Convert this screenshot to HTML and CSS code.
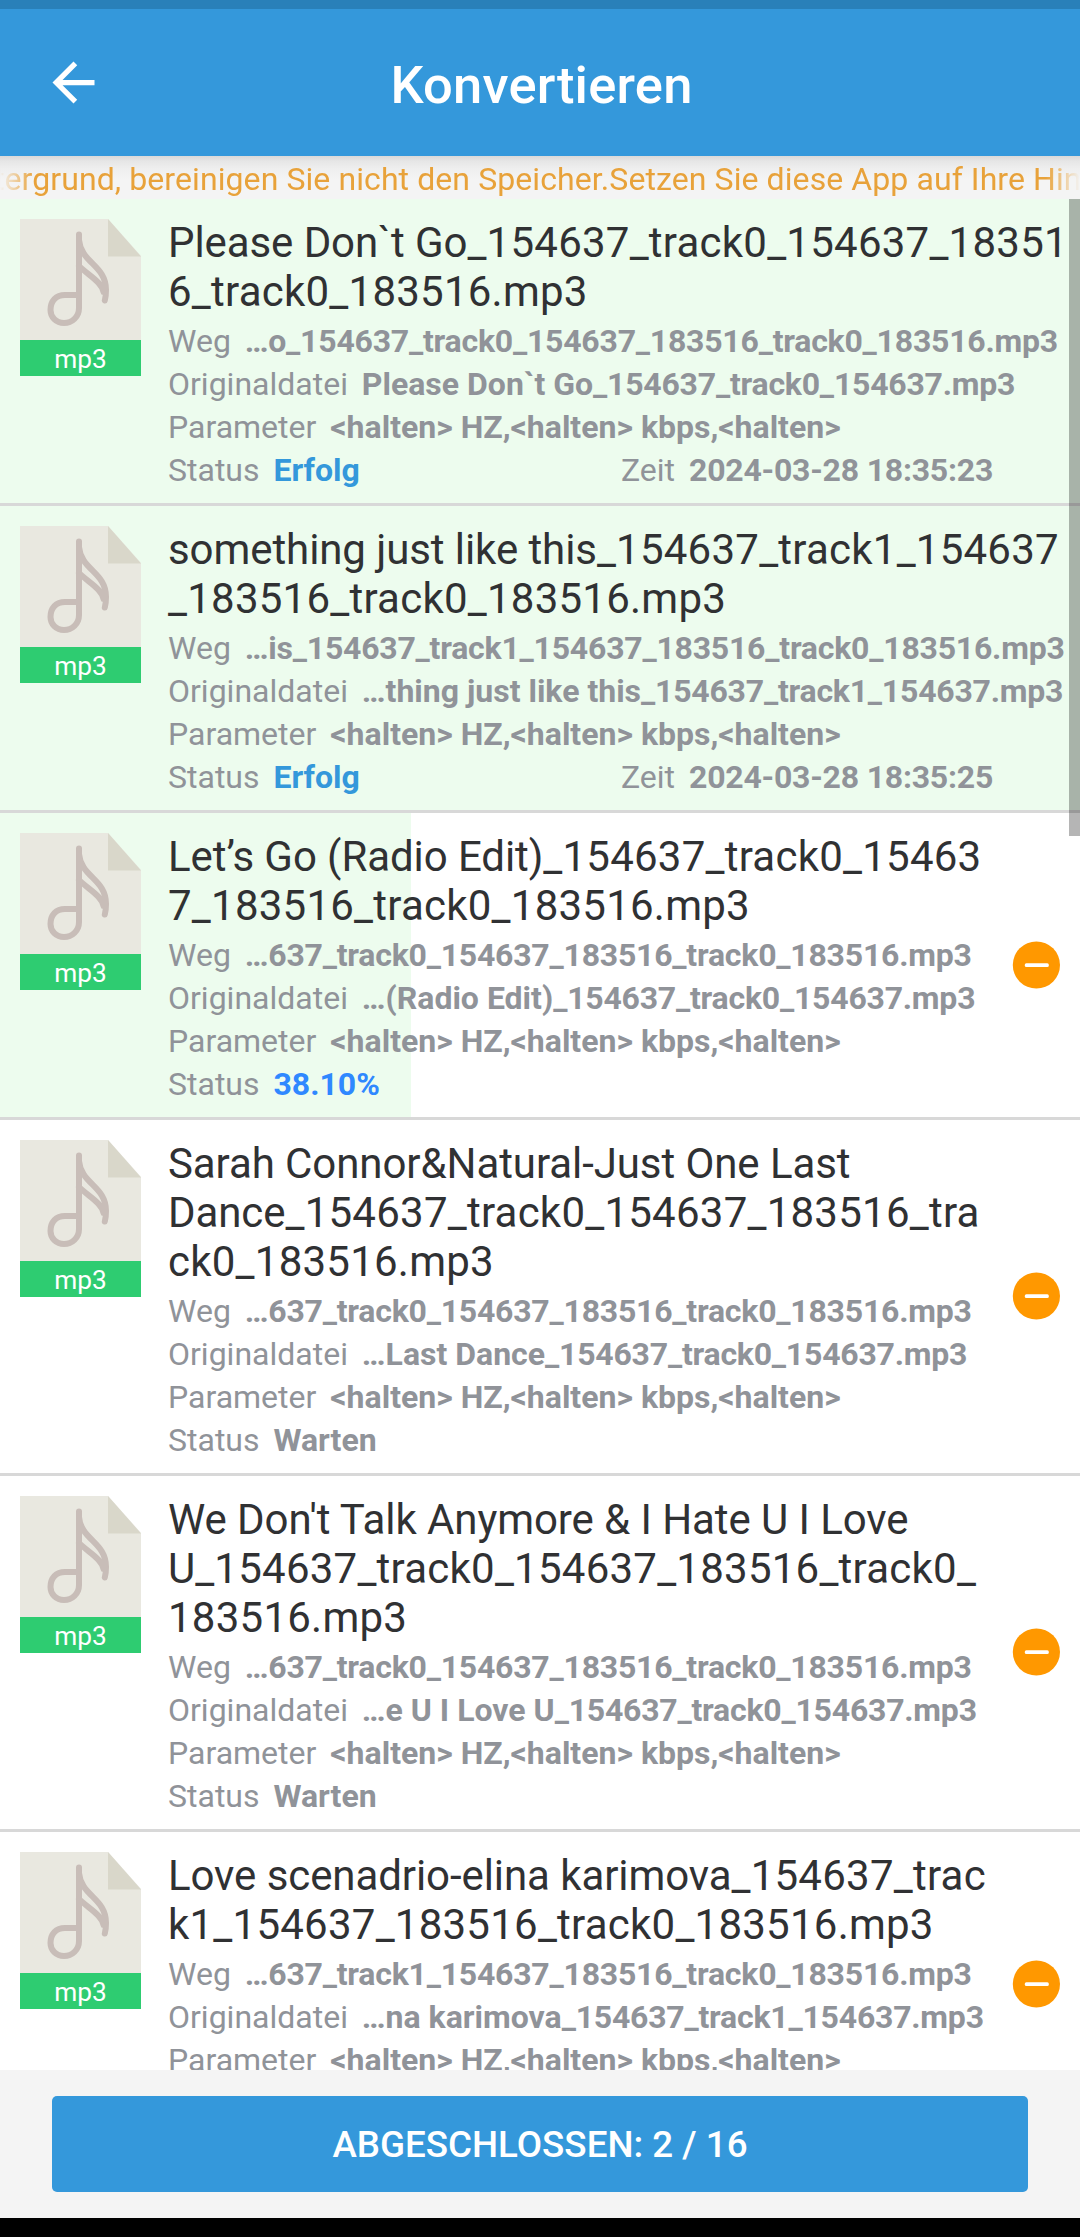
FILE: index.html
```html
<!DOCTYPE html>
<html lang="de">
<head>
<meta charset="utf-8">
<title>Konvertieren</title>
<link rel="stylesheet" href="styles.css">
</head>
<body>
<svg class="defs" aria-hidden="true">
  <symbol id="file" viewBox="0 0 121 121">
    <path fill="#e9e8e0" d="M0 0H88L121 37V121H0Z"/>
    <path fill="#d9d7ca" d="M88 0V37.500H121Z"/>
    <path fill="none" stroke="#c8bdb8" stroke-width="6" stroke-linecap="round" stroke-linejoin="round" d="M59 15.500V89C59 98 52 104 44 104C36 104 30.500 98 30.500 91C30.500 82 36 76 45 76H59M59 21C61 44 86 46 86 71C86 75 85.500 79 84.800 81.500M59 47C68 56 82 63 83.500 73"/>
  </symbol>
  <symbol id="minus" viewBox="0 0 48 48">
    <circle cx="24.400" cy="24" r="23.600" fill="#ff9800"/>
    <rect x="12.800" y="22.200" width="24" height="3.900" rx="1.500" fill="#fff"/>
  </symbol>
</svg>
<div class="screen">
  <div class="statusbar"></div>
  <header class="appbar">
    <svg class="back" viewBox="0 0 24 24"><path fill="#fff" d="M20 11H7.830l5.590-5.590L12 4l-8 8 8 8 1.410-1.410L7.830 13H20z"/></svg>
    <h1 class="title">Konvertieren</h1>
  </header>
  <div class="notice"><p class="notice-text">tergrund, bereinigen Sie nicht den Speicher.Setzen Sie diese App auf Ihre Hin</p></div>

  <main class="list">
    <article class="item">
      <div class="progress" style="width:100%"></div>
      <div class="thumb"><svg class="page"><use href="#file"/></svg><span class="ext">mp3</span></div>
      <div class="info">
        <h2 class="name">Please Don`t Go<span class="tail">_154637_track0_154637_18351<br>6_track0_183516.mp3</span></h2>
        <p class="row">Weg <b class="tail">…o_154637_track0_154637_183516_track0_183516.mp3</b></p>
        <p class="row">Originaldatei <b>Please Don`t Go<span class="tail">_154637_track0_154637.mp3</span></b></p>
        <p class="row">Parameter <b>&lt;halten&gt; HZ,&lt;halten&gt; kbps,&lt;halten&gt;</b></p>
        <div class="split"><p class="row">Status <b class="done">Erfolg</b></p><p class="row">Zeit <b class="tail">2024-03-28 18:35:23</b></p></div>
      </div>
    </article>
    <article class="item">
      <div class="progress" style="width:100%"></div>
      <div class="thumb"><svg class="page"><use href="#file"/></svg><span class="ext">mp3</span></div>
      <div class="info">
        <h2 class="name">something just like this<span class="tail">_154637_track1_154637<br>_183516_track0_183516.mp3</span></h2>
        <p class="row">Weg <b class="tail">…is_154637_track1_154637_183516_track0_183516.mp3</b></p>
        <p class="row">Originaldatei <b>…thing just like this<span class="tail">_154637_track1_154637.mp3</span></b></p>
        <p class="row">Parameter <b>&lt;halten&gt; HZ,&lt;halten&gt; kbps,&lt;halten&gt;</b></p>
        <div class="split"><p class="row">Status <b class="done">Erfolg</b></p><p class="row">Zeit <b class="tail">2024-03-28 18:35:25</b></p></div>
      </div>
    </article>
    <article class="item">
      <div class="progress" style="width:38.1%"></div>
      <div class="thumb"><svg class="page"><use href="#file"/></svg><span class="ext">mp3</span></div>
      <div class="info">
        <h2 class="name">Let’s Go (Radio Edit)<span class="tail">_154637_track0_15463<br>7_183516_track0_183516.mp3</span></h2>
        <p class="row">Weg <b class="tail">…637_track0_154637_183516_track0_183516.mp3</b></p>
        <p class="row">Originaldatei <b>…(Radio Edit)<span class="tail">_154637_track0_154637.mp3</span></b></p>
        <p class="row">Parameter <b>&lt;halten&gt; HZ,&lt;halten&gt; kbps,&lt;halten&gt;</b></p>
        <p class="row">Status <b class="running">38.10%</b></p>
      </div>
      <svg class="remove"><use href="#minus"/></svg>
    </article>
    <article class="item">
      <div class="thumb"><svg class="page"><use href="#file"/></svg><span class="ext">mp3</span></div>
      <div class="info">
        <h2 class="name">Sarah Connor&amp;Natural-Just One Last<br>Dance<span class="tail">_154637_track0_154637_183516_tra<br>ck0_183516.mp3</span></h2>
        <p class="row">Weg <b class="tail">…637_track0_154637_183516_track0_183516.mp3</b></p>
        <p class="row">Originaldatei <b>…Last Dance<span class="tail">_154637_track0_154637.mp3</span></b></p>
        <p class="row">Parameter <b>&lt;halten&gt; HZ,&lt;halten&gt; kbps,&lt;halten&gt;</b></p>
        <p class="row">Status <b>Warten</b></p>
      </div>
      <svg class="remove"><use href="#minus"/></svg>
    </article>
    <article class="item">
      <div class="thumb"><svg class="page"><use href="#file"/></svg><span class="ext">mp3</span></div>
      <div class="info">
        <h2 class="name">We Don't Talk Anymore &amp; I Hate U I Love<br>U<span class="tail">_154637_track0_154637_183516_track0_<br>183516.mp3</span></h2>
        <p class="row">Weg <b class="tail">…637_track0_154637_183516_track0_183516.mp3</b></p>
        <p class="row">Originaldatei <b>…e U I Love U<span class="tail">_154637_track0_154637.mp3</span></b></p>
        <p class="row">Parameter <b>&lt;halten&gt; HZ,&lt;halten&gt; kbps,&lt;halten&gt;</b></p>
        <p class="row">Status <b>Warten</b></p>
      </div>
      <svg class="remove"><use href="#minus"/></svg>
    </article>
    <article class="item">
      <div class="thumb"><svg class="page"><use href="#file"/></svg><span class="ext">mp3</span></div>
      <div class="info">
        <h2 class="name">Love scenadrio-elina karimova<span class="tail">_154637_trac<br>k1_154637_183516_track0_183516.mp3</span></h2>
        <p class="row">Weg <b class="tail">…637_track1_154637_183516_track0_183516.mp3</b></p>
        <p class="row">Originaldatei <b>…na karimova<span class="tail">_154637_track1_154637.mp3</span></b></p>
        <p class="row">Parameter <b>&lt;halten&gt; HZ,&lt;halten&gt; kbps,&lt;halten&gt;</b></p>
        <p class="row">Status <b>Warten</b></p>
      </div>
      <svg class="remove"><use href="#minus"/></svg>
    </article>
    <div class="scrollbar"></div>
  </main>

  <footer class="footer"><button class="action">ABGESCHLOSSEN: 2 / 16</button></footer>
  <div class="navbar"></div>
</div>
</body>
</html>
```
FILE: styles.css
```css
* { box-sizing: border-box; margin: 0; padding: 0; }

body { font-family: Roboto, sans-serif; background: #f4f4f4; }

.defs { display: none; }

.screen {
  display: flex;
  flex-direction: column;
  width: 1080px;
  height: 2237px;
  overflow: hidden;
}

.statusbar { flex: none; height: 9px; background: #2980b9; }

.appbar {
  flex: none;
  display: grid;
  grid-template-columns: 63px 1fr 63px;
  align-items: center;
  height: 147px;
  padding: 0 42px;
  background: #3498db;
}
.back { width: 63px; height: 63px; }
.title {
  color: #fff;
  font-size: 52.5px;
  font-weight: 500;
  line-height: 62px;
  letter-spacing: 0.22px;
  text-align: center;
  padding: 4px 0 0 3px;
}

.notice {
  flex: none;
  height: 43px;
  overflow: hidden;
  background: linear-gradient(#d9d9d9, #e6e6e6 5px, #efefef 13px, #f4f4f4 24px);
}
.notice-text {
  color: #e8a23a;
  font-size: 32px;
  line-height: 42px;
  letter-spacing: 0.085px;
  padding-top: 2px;
  white-space: nowrap;
  text-indent: -6px;
  mask-image: linear-gradient(90deg, transparent, #000 34px, #000 1046px, transparent);
}

.list {
  flex: 1;
  min-height: 0;
  position: relative;
  overflow: hidden;
  background: #fff;
}

.item {
  position: relative;
  display: flex;
  align-items: flex-start;
  padding: 20px 20px 11px;
  border-bottom: 3px solid #d8d8d8;
}
.progress {
  position: absolute;
  inset: 0 auto 0 0;
  background: #edfcee;
}

.thumb { position: relative; flex: none; width: 121px; }
.page { display: block; width: 121px; height: 121px; }
.ext {
  display: block;
  height: 36px;
  background: #2ecc71;
  color: #fff;
  font-size: 26.25px;
  line-height: 38px;
  text-align: center;
}

.info {
  position: relative;
  flex: 1;
  min-width: 0;
  margin-left: 27px;
  white-space: nowrap;
}
.name {
  margin: -1px 0 4px;
  color: #303133;
  font-size: 42px;
  font-weight: 400;
  line-height: 49px;
  letter-spacing: -0.08px;
}
.name .tail { letter-spacing: 0.24px; }
.row {
  color: #909399;
  font-size: 32px;
  line-height: 43px;
}
.row b { margin-left: 6px; font-weight: 700; }
.row .tail { letter-spacing: -0.22px; }
.row .done { color: #3498db; }
.row .running { color: #2f88ff; }
.split { display: grid; grid-template-columns: 453px 1fr; }

.remove { flex: none; align-self: center; width: 48px; height: 48px; margin-top: -10px; }

.scrollbar {
  position: absolute;
  top: 0;
  right: 0;
  width: 11px;
  height: 637px;
  background: rgba(0, 0, 0, 0.29);
}

.footer {
  flex: none;
  display: flex;
  height: 148px;
  padding: 26px 52px;
  background: #f4f4f4;
}
.action {
  flex: 1;
  border: 0;
  border-radius: 5px;
  background: #3498db;
  color: #fff;
  padding-top: 1px;
  font: 500 36.75px/43px Roboto, sans-serif;
}

.navbar { flex: none; height: 19px; background: #000; }
```
